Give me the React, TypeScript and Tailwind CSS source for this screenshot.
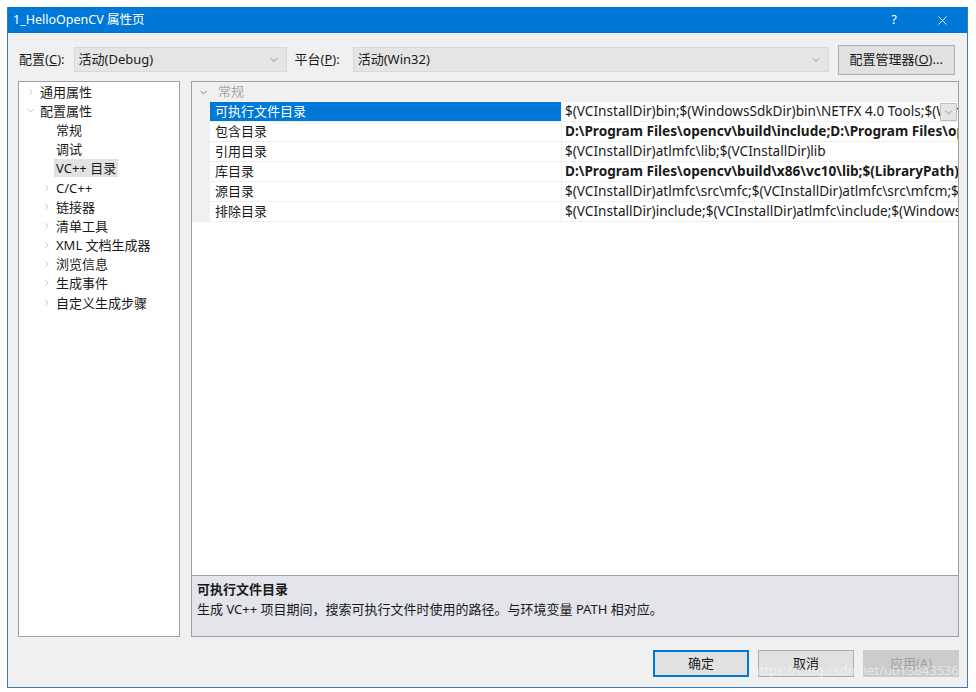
import { ChevronDown, ChevronRight, X } from "lucide-react";

const tree = [
  { label: "通用属性", level: 1, icon: "right" },
  { label: "配置属性", level: 1, icon: "down" },
  { label: "常规", level: 2, icon: "" },
  { label: "调试", level: 2, icon: "" },
  { label: "VC++ 目录", level: 2, icon: "", selected: true },
  { label: "C/C++", level: 2, icon: "right" },
  { label: "链接器", level: 2, icon: "right" },
  { label: "清单工具", level: 2, icon: "right" },
  { label: "XML 文档生成器", level: 2, icon: "right" },
  { label: "浏览信息", level: 2, icon: "right" },
  { label: "生成事件", level: 2, icon: "right" },
  { label: "自定义生成步骤", level: 2, icon: "right" },
];

const rows = [
  { name: "可执行文件目录", value: "$(VCInstallDir)bin;$(WindowsSdkDir)bin\\NETFX 4.0 Tools;$(WindowsSdkDir)bin;$(VSInstallDir)Common7\\Tools\\bin", bold: false, selected: true },
  { name: "包含目录", value: "D:\\Program Files\\opencv\\build\\include;D:\\Program Files\\opencv\\build\\include\\opencv;$(IncludePath)", bold: true },
  { name: "引用目录", value: "$(VCInstallDir)atlmfc\\lib;$(VCInstallDir)lib", bold: false },
  { name: "库目录", value: "D:\\Program Files\\opencv\\build\\x86\\vc10\\lib;$(LibraryPath)", bold: true },
  { name: "源目录", value: "$(VCInstallDir)atlmfc\\src\\mfc;$(VCInstallDir)atlmfc\\src\\mfcm;$(VCInstallDir)atlmfc\\src\\atl", bold: false },
  { name: "排除目录", value: "$(VCInstallDir)include;$(VCInstallDir)atlmfc\\include;$(WindowsSdkDir)include", bold: false },
];

function Combo({ text, className }: { text: string; className: string }) {
  return (
    <div className={`flex h-[25px] items-center justify-between border border-[#d9d9d9] bg-[#e5e5e5] pl-[4px] pr-[6px] ${className}`}>
      <span>{text}</span>
      <ChevronDown size={12} strokeWidth={1.2} className="text-[#606060]" />
    </div>
  );
}

export default function App() {
  return (
    <div className="h-[692px] w-[976px] bg-white pl-[7px] pt-[7px] font-['Noto_Sans','Noto_Sans_CJK_SC',sans-serif] text-[13px] text-[#1a1a1a]">
      <div className="flex h-[681px] w-[961px] flex-col border-x border-b border-[#3f7cb4] bg-[#f0f0f0]">
        {/* title bar */}
        <div className="flex h-[26px] items-center bg-[#0078d7] pl-[5px] text-white">
          <span className="flex-1 text-[12.5px]">1_HelloOpenCV 属性页</span>
          <span className="w-[20px] text-center text-[13px]">?</span>
          <span className="ml-[30px] mr-[17px] flex w-[16px] justify-center">
            <X size={15} strokeWidth={1.4} />
          </span>
        </div>

        {/* config row */}
        <div className="mt-[14px] flex h-[25px] items-center pl-[11px]">
          <span>配置(<u>C</u>):</span>
          <Combo text="活动(Debug)" className="ml-[9px] w-[213px]" />
          <span className="ml-[8px]">平台(<u>P</u>):</span>
          <Combo text="活动(Win32)" className="ml-[13px] w-[476px]" />
          <div className="ml-[9px] flex h-[30px] w-[117px] items-center justify-center border border-[#adadad] bg-[#e1e1e1]">
            配置管理器(<u>O</u>)...
          </div>
        </div>

        {/* main area */}
        <div className="mt-[9px] flex h-[556px] pl-[10px]">
          <div className="w-[162px] border border-[#a0a0a0] bg-white">
            {tree.map((t) => (
              <div key={t.label} className={`flex h-[19.2px] items-center ${t.level === 1 ? "pl-[4px]" : "pl-[20px]"}`}>
                <span className="flex w-[15px] justify-center text-[#9a9a9a]">
                  {t.icon === "right" && <ChevronRight size={10} strokeWidth={1.4} />}
                  {t.icon === "down" && <ChevronDown size={11} strokeWidth={1.4} />}
                </span>
                <span className={`px-[2px] leading-[18px] ${t.selected ? "bg-[#e2e2e2]" : ""}`}>{t.label}</span>
              </div>
            ))}
          </div>

          <div className="ml-[11px] flex w-[768px] flex-col border border-[#a0a0a0] bg-white">
            <div className="flex-1 overflow-hidden">
              <div className="flex h-[20px] items-center bg-[#f0f0f0] pl-[6px] text-[#a6a6a6]">
                <ChevronDown size={11} strokeWidth={1.6} className="text-[#606060]" />
                <span className="ml-[9px]">常规</span>
              </div>
              {rows.map((r) => (
                <div key={r.name} className="flex h-[20px]">
                  <div className="w-[18px] bg-[#f0f0f0]" />
                  <div className={`flex w-[351px] items-center border-b border-[#f0f0f0] pl-[5px] ${r.selected ? "bg-[#0078d7] text-white" : ""}`}>
                    {r.name}
                  </div>
                  <div className="relative flex min-w-0 flex-1 items-center overflow-hidden whitespace-nowrap border-b border-l border-[#f0f0f0] pl-[3px] text-[13.6px]">
                    <span className={r.bold ? "font-bold" : ""}>{r.value}</span>
                    {r.selected && (
                      <span className="absolute right-[1px] top-[1px] flex h-[18px] w-[17px] items-center justify-center border border-[#c0c0c0] bg-[#e5e5e5]">
                        <ChevronDown size={11} strokeWidth={1.3} className="text-[#606060]" />
                      </span>
                    )}
                  </div>
                </div>
              ))}
            </div>
            <div className="h-[61px] border-t border-[#a0a0a0] bg-[#e3e5ea] pl-[5px] pt-[4px]">
              <div className="font-bold leading-[19px]">可执行文件目录</div>
              <div className="leading-[20px]">生成 VC++ 项目期间，搜索可执行文件时使用的路径。与环境变量 PATH 相对应。</div>
            </div>
          </div>
        </div>

        {/* buttons */}
        <div className="relative mt-[13px] flex justify-end gap-[9px] pr-[8px]">
          <div className="flex h-[27px] w-[96px] items-center justify-center border-2 border-[#0078d7] bg-[#e1e1e1]">确定</div>
          <div className="flex h-[27px] w-[96px] items-center justify-center border border-[#adadad] bg-[#e1e1e1]">取消</div>
          <div className="flex h-[27px] w-[96px] items-center justify-center border border-[#cccccc] bg-[#cccccc] text-[#a0a0a0]">应用(A)</div>
          <span className="pointer-events-none absolute right-[8px] top-[12px] text-[13px] leading-[16px] text-white/50">https://blog.csdn.net/u013843536</span>
        </div>
      </div>
    </div>
  );
}
